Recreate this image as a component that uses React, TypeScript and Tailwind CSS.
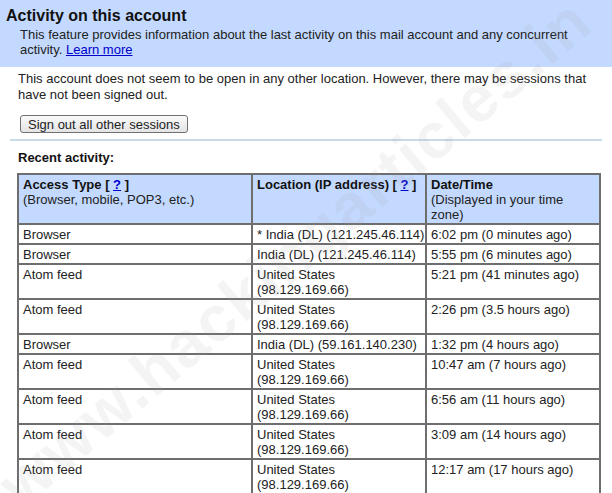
import React from "react"

type Row = { type: string; location: string[]; time: string }

const rows: Row[] = [
  { type: "Browser", location: ["* India (DL) (121.245.46.114)"], time: "6:02 pm (0 minutes ago)" },
  { type: "Browser", location: ["India (DL) (121.245.46.114)"], time: "5:55 pm (6 minutes ago)" },
  { type: "Atom feed", location: ["United States", "(98.129.169.66)"], time: "5:21 pm (41 minutes ago)" },
  { type: "Atom feed", location: ["United States", "(98.129.169.66)"], time: "2:26 pm (3.5 hours ago)" },
  { type: "Browser", location: ["India (DL) (59.161.140.230)"], time: "1:32 pm (4 hours ago)" },
  { type: "Atom feed", location: ["United States", "(98.129.169.66)"], time: "10:47 am (7 hours ago)" },
  { type: "Atom feed", location: ["United States", "(98.129.169.66)"], time: "6:56 am (11 hours ago)" },
  { type: "Atom feed", location: ["United States", "(98.129.169.66)"], time: "3:09 am (14 hours ago)" },
  { type: "Atom feed", location: ["United States", "(98.129.169.66)"], time: "12:17 am (17 hours ago)" },
]

const cell = "border-2 border-[#6e6e6e] pl-[4px] pr-[2px] pt-[2px] pb-[1px] align-top"

function Help() {
  return (
    <span>
      [ <a href="#" className="text-[#0000cc] underline">?</a> ]
    </span>
  )
}

export default function App() {
  return (
    <div className="relative w-[612px] h-[493px] overflow-hidden bg-white text-[13px] leading-[15px] text-[#222] font-['Liberation_Sans',Arial,sans-serif]">
      <div className="bg-[#c3d9ff] pl-[6px] pt-[6px] pb-[10px]">
        <h1 className="text-[16px] leading-[19px] font-bold text-[#111]">Activity on this account</h1>
        <p className="pl-[14px] pt-[2px]">
          This feature provides information about the last activity on this mail account and any concurrent
          activity. <a href="#" className="text-[#0000cc] underline">Learn more</a>
        </p>
      </div>

      <div className="px-[18px] pt-[4px]">
        <p className="leading-[16px]">
          This account does not seem to be open in any other location. However, there may be sessions that
          have not been signed out.
        </p>
        <button className="mt-[12px] ml-[2px] h-[18px] px-[7px] rounded-[3px] border border-[#707070] bg-gradient-to-b from-[#fafafa] to-[#e4e4e4] leading-[15px]">
          Sign out all other sessions
        </button>
      </div>

      <div className="mx-[10px] mt-[6px] h-[2px] bg-[#c9dbe6]" />

      <div className="px-[18px] pt-[9px]">
        <h2 className="font-bold text-[#111]">Recent activity:</h2>
      </div>

      <table className="ml-[17px] mt-[8px] w-[582px] table-fixed border-collapse">
        <colgroup>
          <col className="w-[234px]" />
          <col className="w-[174px]" />
          <col className="w-[174px]" />
        </colgroup>
        <thead>
          <tr className="bg-[#c3d9ff]">
            <th className={`${cell} text-left font-normal`}>
              <span className="font-bold text-[#111]">Access Type <Help /></span>
              <br />
              (Browser, mobile, POP3, etc.)
            </th>
            <th className={`${cell} text-left font-normal`}>
              <span className="font-bold text-[#111]">Location (IP address) <Help /></span>
            </th>
            <th className={`${cell} text-left font-normal`}>
              <span className="font-bold text-[#111]">Date/Time</span>
              <br />
              (Displayed in your time zone)
            </th>
          </tr>
        </thead>
        <tbody>
          {rows.map((r, i) => (
            <tr key={i}>
              <td className={cell}>{r.type}</td>
              <td className={cell}>
                {r.location.map((l, j) => (
                  <div key={j} className="whitespace-nowrap">{l}</div>
                ))}
              </td>
              <td className={cell}>{r.time}</td>
            </tr>
          ))}
        </tbody>
      </table>

      <div className="pointer-events-none absolute left-[-100px] top-[245px] w-[790px] -rotate-[40deg] text-center text-[64px] font-bold tracking-[2px] text-[#a0a0a0] opacity-[0.1]">
        www.hackingarticles.in
      </div>
    </div>
  )
}
